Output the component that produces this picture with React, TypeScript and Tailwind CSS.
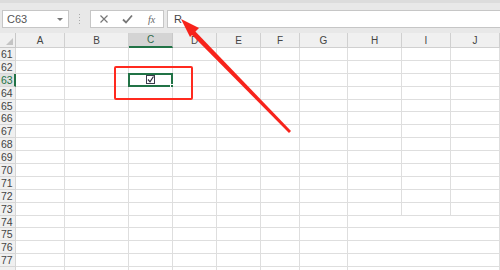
import React from "react";

const cols = ["A", "B", "C", "D", "E", "F", "G", "H", "I", "J"];
const rows = Array.from({ length: 18 }, (_, i) => 61 + i);

export default function App() {
  return (
    <div className="relative w-[500px] h-[270px] overflow-hidden bg-white font-['Liberation_Sans',Arial,sans-serif] text-[#444]">
      {/* formula bar */}
      <div className="h-[33px] bg-[#e8e8e8] border-t-[3px] border-[#dcdcdc] flex items-start pt-[7px] pl-[2px]">
        <div className="w-[67px] h-[18px] bg-white border border-[#c6c6c6] flex items-center justify-between pl-[4px] pr-[5px]">
          <span className="text-[11px] text-[#555]">C63</span>
          <span className="w-0 h-0 border-l-[3px] border-r-[3px] border-t-[3px] border-l-transparent border-r-transparent border-t-[#777]" />
        </div>
        <div className="w-[21px] h-[18px] flex flex-col items-center justify-center gap-[2px]">
          <span className="w-[1px] h-[1px] bg-[#aaa]" />
          <span className="w-[1px] h-[1px] bg-[#aaa]" />
          <span className="w-[1px] h-[1px] bg-[#aaa]" />
          <span className="w-[1px] h-[1px] bg-[#aaa]" />
        </div>
        <div className="w-[74px] h-[18px] bg-white border border-[#c6c6c6] flex items-center pl-[8px] gap-[13px]">
          <svg width="10" height="10" viewBox="0 0 10 10">
            <path d="M1.5 1.5 L8.5 8.5 M8.5 1.5 L1.5 8.5" stroke="#777" strokeWidth="1.2" />
          </svg>
          <svg width="11" height="10" viewBox="0 0 11 10">
            <path d="M1 5.5 L4 8.5 L10 1.5" stroke="#777" strokeWidth="1.8" fill="none" />
          </svg>
          <span className="text-[10px] italic text-[#666] font-['Liberation_Serif',serif] ml-[2px]">fx</span>
        </div>
        <div className="flex-1 ml-[3px] h-[18px] bg-white border border-[#c6c6c6] border-r-0 flex items-center pl-[6px]">
          <span className="text-[11px] text-[#444]">R</span>
        </div>
      </div>

      {/* grid */}
      <div className="grid grid-cols-[16px_49px_64px_44px_44px_44px_39px_48px_54px_49px_49px]">
        <div className="h-[15px] bg-[#f0f0f0] border-b border-r border-[#c8c8c8] relative">
          <svg className="absolute right-[2px] bottom-[2px]" width="7" height="7" viewBox="0 0 7 7">
            <polygon points="7,0 7,7 0,7" fill="#c4c4c4" />
          </svg>
        </div>
        {cols.map((c) => (
          <div
            key={c}
            className={
              c === "C"
                ? "h-[15px] bg-[#d4d4d4] border-b-2 border-b-[#217346] border-r border-r-[#c8c8c8] flex items-center justify-center text-[10px] text-[#2f6b4a]"
                : "h-[15px] bg-[#f0f0f0] border-b border-r border-[#d0d0d0] flex items-center justify-center text-[10px] text-[#444]"
            }
          >
            {c}
          </div>
        ))}

        {rows.map((r) => (
          <React.Fragment key={r}>
            <div
              className={
                r === 63
                  ? "h-[12.9px] bg-[#e1e1e1] border-b border-[#d6d6d6] border-r-2 border-r-[#217346] text-[10.5px] leading-[12px] pl-[1px] text-[#217346]"
                  : "h-[12.9px] bg-[#f0f0f0] border-b border-r border-[#d6d6d6] text-[10.5px] leading-[12px] pl-[1px] text-[#444]"
              }
            >
              {r < 78 ? r : ""}
            </div>
            {cols.map((c) => {
              const noRight = r > 73 && (c === "H" || c === "I");
              return (
                <div
                  key={c}
                  className={
                    "relative h-[12.9px] border-b border-[#dedede] " +
                    (noRight ? "" : "border-r")
                  }
                >
                  {r === 63 && c === "C" && (
                    <div className="absolute -left-[1px] -top-[1px] right-[-1px] bottom-[-1px] border-2 border-[#217346] flex items-center justify-center">
                      <svg width="9" height="9" viewBox="0 0 9 9">
                        <rect x="0.5" y="0.5" width="8" height="8" fill="none" stroke="#3a3a4a" strokeWidth="1" />
                        <path d="M2 4.5 L4 6.8 L7.5 1.5" fill="none" stroke="#2a2a3a" strokeWidth="1.2" />
                      </svg>
                      <span className="absolute -right-[3px] -bottom-[3px] w-[4px] h-[4px] bg-[#217346] border border-white" />
                    </div>
                  )}
                </div>
              );
            })}
          </React.Fragment>
        ))}
      </div>

      {/* annotation */}
      <div className="absolute left-[114px] top-[66px] w-[79px] h-[34px] border-2 border-[#ff2a1f] rounded-[2px]" />
      <svg className="absolute left-0 top-0" width="500" height="270" viewBox="0 0 500 270">
        <polygon points="289,133 291,131 193,29 190,33" fill="#f7231b" />
        <polygon points="181,19 199,28 190,37" fill="#f7231b" />
      </svg>
    </div>
  );
}
